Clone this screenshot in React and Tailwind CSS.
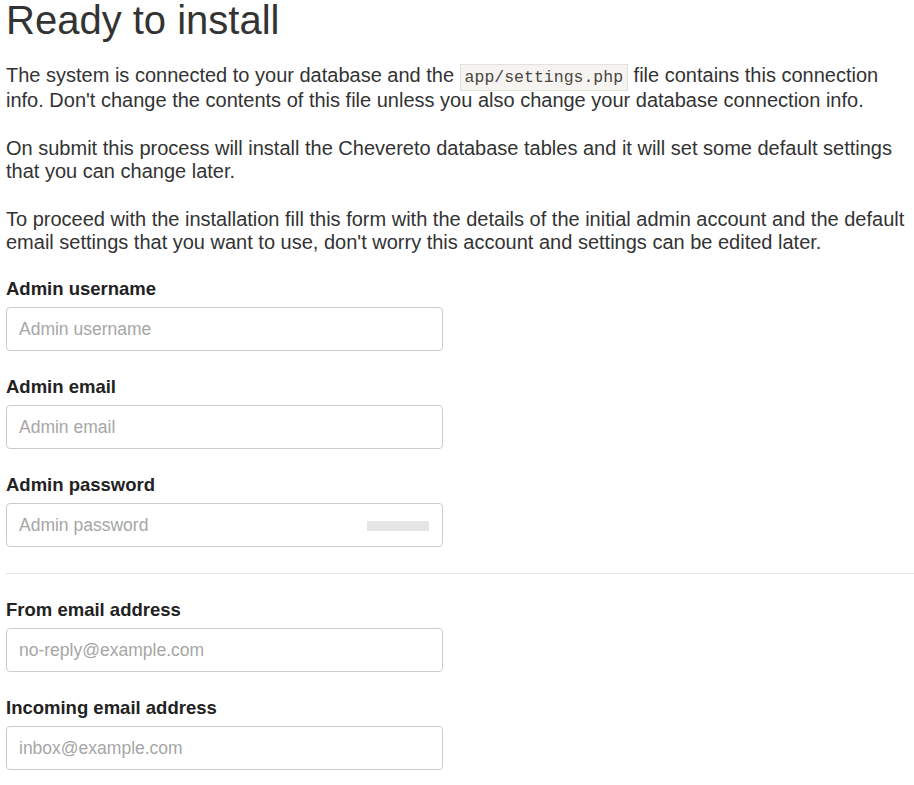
export default function App() {
  const grupos = [
    { label: "Admin username", placeholder: "Admin username", type: "text" },
    { label: "Admin email", placeholder: "Admin email", type: "email" },
    { label: "Admin password", placeholder: "Admin password", type: "password", medidor: true },
  ];
  const emails = [
    { label: "From email address", placeholder: "no-reply@example.com" },
    { label: "Incoming email address", placeholder: "inbox@example.com" },
  ];

  const Campo = ({ label, placeholder, type = "text", medidor }) => (
    <div className="mb-[24px]">
      <label className="block text-[18.5px] leading-[23px] font-bold text-[#222] mb-[7px]">
        {label}
      </label>
      <div className="relative w-[437px]">
        <input
          type={type}
          placeholder={placeholder}
          className="block w-full h-[44px] border border-[#ccc] rounded-[4px] px-[12px] text-[17.5px] text-[#333] placeholder:text-[#a6a6a6] bg-white outline-none"
        />
        {medidor && (
          <div className="absolute right-[14px] top-[18px] w-[62px] h-[10px] bg-[#e5e5e5]" />
        )}
      </div>
    </div>
  );

  return (
    <div className="min-h-screen bg-white pl-[6px] font-['Liberation_Sans',Arial,sans-serif] text-[#333]">
      <h1 className="text-[40px] leading-[40px] font-normal text-[#333] mb-[24px]">
        Ready to install
      </h1>
      <p className="text-[20px] leading-[23px] mb-[25px]">
        The system is connected to your database and the{" "}
        <code className="font-['Liberation_Mono',monospace] text-[16.5px] text-[#4a4540] bg-[#f6f4f1] border border-[#e3e1de] px-[4px] py-[3px]">
          app/settings.php
        </code>{" "}
        file contains this connection info. Don't change the contents of this file unless you also change your database connection info.
      </p>
      <p className="text-[20px] leading-[23px] mb-[25px]">
        On submit this process will install the Chevereto database tables and it will set some default settings that you can change later.
      </p>
      <p className="text-[20px] leading-[23px] mb-[23px]">
        To proceed with the installation fill this form with the details of the initial admin account and the default email settings that you want to use, don't worry this account and settings can be edited later.
      </p>

      {grupos.map((g) => (
        <Campo key={g.label} {...g} />
      ))}

      <hr className="border-0 border-t border-[#e5e5e5] mt-[26px] mb-[24px]" />

      {emails.map((g) => (
        <Campo key={g.label} {...g} type="email" />
      ))}
    </div>
  );
}
